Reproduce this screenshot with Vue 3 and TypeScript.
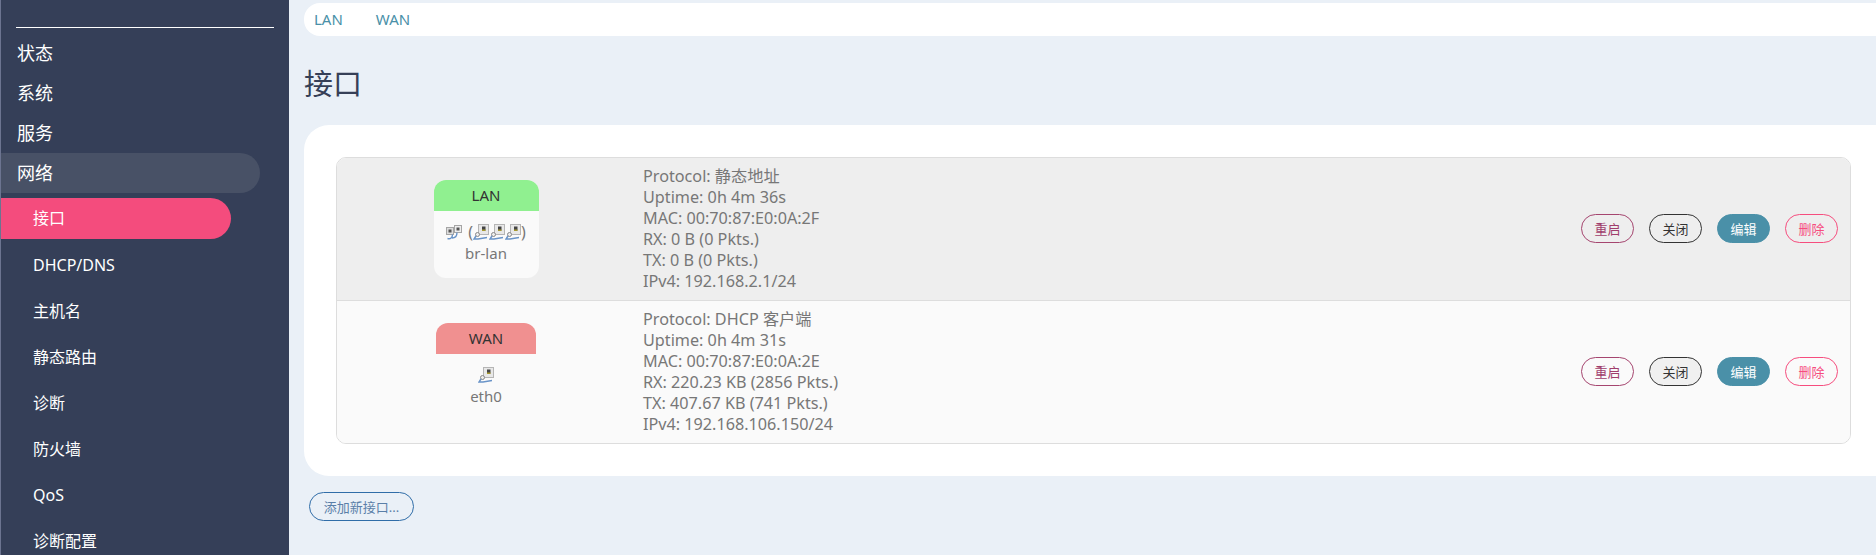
<script setup lang="ts">
interface NetRow {
  name: string
  color: string
  device: string
  bridge: boolean
  info: string[]
  hovered: boolean
}

const topMenu = ['状态', '系统', '服务']
const subMenu = ['DHCP/DNS', '主机名', '静态路由', '诊断', '防火墙', 'QoS', '诊断配置']

const rows: NetRow[] = [
  {
    name: 'LAN',
    color: '#90f090',
    device: 'br-lan',
    bridge: true,
    hovered: false,
    info: [
      'Protocol: 静态地址',
      'Uptime: 0h 4m 36s',
      'MAC: 00:70:87:E0:0A:2F',
      'RX: 0 B (0 Pkts.)',
      'TX: 0 B (0 Pkts.)',
      'IPv4: 192.168.2.1/24'
    ]
  },
  {
    name: 'WAN',
    color: '#f09090',
    device: 'eth0',
    bridge: false,
    hovered: true,
    info: [
      'Protocol: DHCP 客户端',
      'Uptime: 0h 4m 31s',
      'MAC: 00:70:87:E0:0A:2E',
      'RX: 220.23 KB (2856 Pkts.)',
      'TX: 407.67 KB (741 Pkts.)',
      'IPv4: 192.168.106.150/24'
    ]
  }
]
</script>

<template>
  <div class="page">
    <aside class="sidebar">
      <div class="divider"></div>
      <ul class="menu">
        <li v-for="item in topMenu" :key="item" class="menu-item">{{ item }}</li>
        <li class="menu-item open">网络</li>
      </ul>
      <ul class="submenu">
        <li class="sub-item active">接口</li>
        <li v-for="item in subMenu" :key="item" class="sub-item">{{ item }}</li>
      </ul>
    </aside>

    <main class="main">
      <nav class="tabs">
        <a>LAN</a>
        <a>WAN</a>
      </nav>

      <h2 class="title">接口</h2>

      <section class="card">
        <div class="table">
          <div v-for="row in rows" :key="row.name" class="row" :class="{ odd: row.bridge }">
            <div class="badge-cell">
              <div class="badge" :class="{ boxed: row.bridge }">
                <div class="badge-head" :style="{ background: row.color }">{{ row.name }}</div>
                <div class="badge-body">
                  <div class="ports">
                    <template v-if="row.bridge">
                      <svg class="port" width="16" height="16" viewBox="0 0 16 16">
                        <rect x="0.500" y="3.500" width="7" height="7" fill="#ddd" stroke="#a5a5a5" />
                        <rect x="8.500" y="1.500" width="7" height="7" fill="#eee" stroke="#a5a5a5" />
                        <rect x="2.500" y="5.500" width="3" height="3" fill="#555" />
                        <rect x="10.500" y="3.500" width="3" height="3" fill="#555" />
                        <path d="M1.500 14.500c3 1 5-1 5-4M6 14c3 0 5-2 5-5.500" fill="none" stroke="#6a94c8" stroke-width="1.400" />
                      </svg>
                      <span class="paren first">(</span>
                    </template>
                    <svg
                      v-for="n in row.bridge ? 3 : 1"
                      :key="n"
                      class="port"
                      width="16"
                      height="16"
                      viewBox="0 0 16 16"
                    >
                      <rect x="5.500" y="0.500" width="10" height="10" fill="#e8e8e8" stroke="#b5b5b5" />
                      <rect x="9" y="2.500" width="3.500" height="4" fill="#444" />
                      <rect x="9" y="5.500" width="3.500" height="1.500" fill="#a89a30" />
                      <circle cx="4.500" cy="10.500" r="2" fill="#eee" stroke="#888" />
                      <path d="M3 12 1 15h4l9-1.500" fill="none" stroke="#6a94c8" stroke-width="1.500" />
                    </svg>
                    <span v-if="row.bridge" class="paren">)</span>
                  </div>
                  <div class="device">{{ row.device }}</div>
                </div>
              </div>
            </div>

            <div class="info">
              <div v-for="line in row.info" :key="line">{{ line }}</div>
            </div>

            <div class="actions">
              <button class="btn reboot">重启</button>
              <button class="btn stop" :class="{ hover: row.hovered }">关闭</button>
              <button class="btn edit">编辑</button>
              <button class="btn remove">删除</button>
            </div>
          </div>
        </div>
      </section>

      <button class="add-btn">添加新接口...</button>
    </main>
  </div>
</template>

<style>
html,
body {
  margin: 0;
  overflow: hidden;
}
</style>

<style scoped>
.page {
  display: flex;
  height: 555px;
  overflow: hidden;
  background: #eaf0f7;
  font-family: 'Noto Sans', 'Noto Sans CJK SC', sans-serif;
  font-size: 15px;
}

.sidebar {
  flex: 0 0 289px;
  box-sizing: border-box;
  height: 555px;
  overflow: hidden;
  padding-top: 27px;
  background: #353f58;
  border-left: 1px solid #6c7490;
  color: #fff;
}

.divider {
  height: 1px;
  margin: 0 15px;
  background: #fff;
}

ul {
  margin: 0;
  padding: 0;
  list-style: none;
}

.menu {
  padding-top: 5px;
}

.menu-item {
  width: 259px;
  height: 40px;
  box-sizing: border-box;
  padding-left: 16px;
  font-size: 18px;
  line-height: 40px;
}

.menu-item.open {
  background: #485166;
  border-radius: 0 20px 20px 0;
}

.submenu {
  padding-top: 5px;
}

.sub-item {
  width: 230px;
  height: 41px;
  box-sizing: border-box;
  margin-bottom: 5px;
  padding-left: 32px;
  font-size: 16px;
  line-height: 41px;
}

.sub-item.active {
  margin-bottom: 6px;
  background: #f44c7d;
  border-radius: 0 21px 21px 0;
}

.main {
  flex: 1;
  min-width: 0;
  padding: 3px 0 0 15px;
}

.tabs {
  display: flex;
  gap: 33px;
  height: 33px;
  padding-left: 10px;
  background: #fff;
  border-radius: 16px 0 0 16px;
  color: #4a90a8;
  line-height: 33px;
}

.title {
  margin: 27px 0 20px;
  color: #363f57;
  font-size: 29px;
  font-weight: 400;
  line-height: 42px;
}

.card {
  padding: 32px 25px 32px 32px;
  background: #fff;
  border-radius: 25px 0 0 25px;
}

.table {
  border: 1px solid #ddd;
  border-radius: 10px;
  overflow: hidden;
}

.row {
  display: flex;
  align-items: center;
  height: 142px;
  background: #fafafa;
  color: #777;
}

.row.odd {
  background: #eee;
  border-bottom: 1px solid #ddd;
}

.badge-cell {
  display: flex;
  justify-content: center;
  width: 298px;
}

.badge {
  width: 100px;
  height: 98px;
  overflow: hidden;
  border-radius: 12px 12px 0 0;
  text-align: center;
}

.badge.boxed {
  width: 105px;
  background: #fafafa;
  border-radius: 12px;
}

.badge-head {
  height: 31px;
  color: #333;
  line-height: 31px;
}

.badge-body {
  padding-top: 13px;
}

.ports {
  display: flex;
  justify-content: center;
  align-items: center;
  height: 16px;
}

.paren {
  color: #777;
  font-size: 16px;
}

.paren.first {
  margin-left: 6px;
}

.device {
  margin-top: 3px;
  line-height: 20px;
}

.info {
  flex: 1;
  padding-left: 8px;
  font-size: 16.200px;
  line-height: 20.900px;
}

.actions {
  display: flex;
  gap: 15px;
  margin: 0 12px 2px 0;
}

.btn {
  width: 53px;
  height: 29px;
  padding: 0;
  background: transparent;
  border: 1px solid;
  border-radius: 15px;
  font-family: inherit;
  font-size: 13px;
}

.reboot {
  border-color: #a5456f;
  color: #a03d6c;
}

.stop {
  border-color: #333;
  color: #333;
}

.stop.hover {
  background: #f0f0f0;
}

.edit {
  background: #4a90a8;
  border-color: #4a90a8;
  color: #fff;
}

.remove {
  border-color: #f64d7e;
  color: #f64d7e;
}

.add-btn {
  display: block;
  width: 105px;
  height: 29px;
  margin: 16px 0 0 5px;
  padding: 0;
  background: transparent;
  border: 1px solid #306da8;
  border-radius: 15px;
  color: #5a7fa8;
  font-family: inherit;
  font-size: 13px;
}
</style>
